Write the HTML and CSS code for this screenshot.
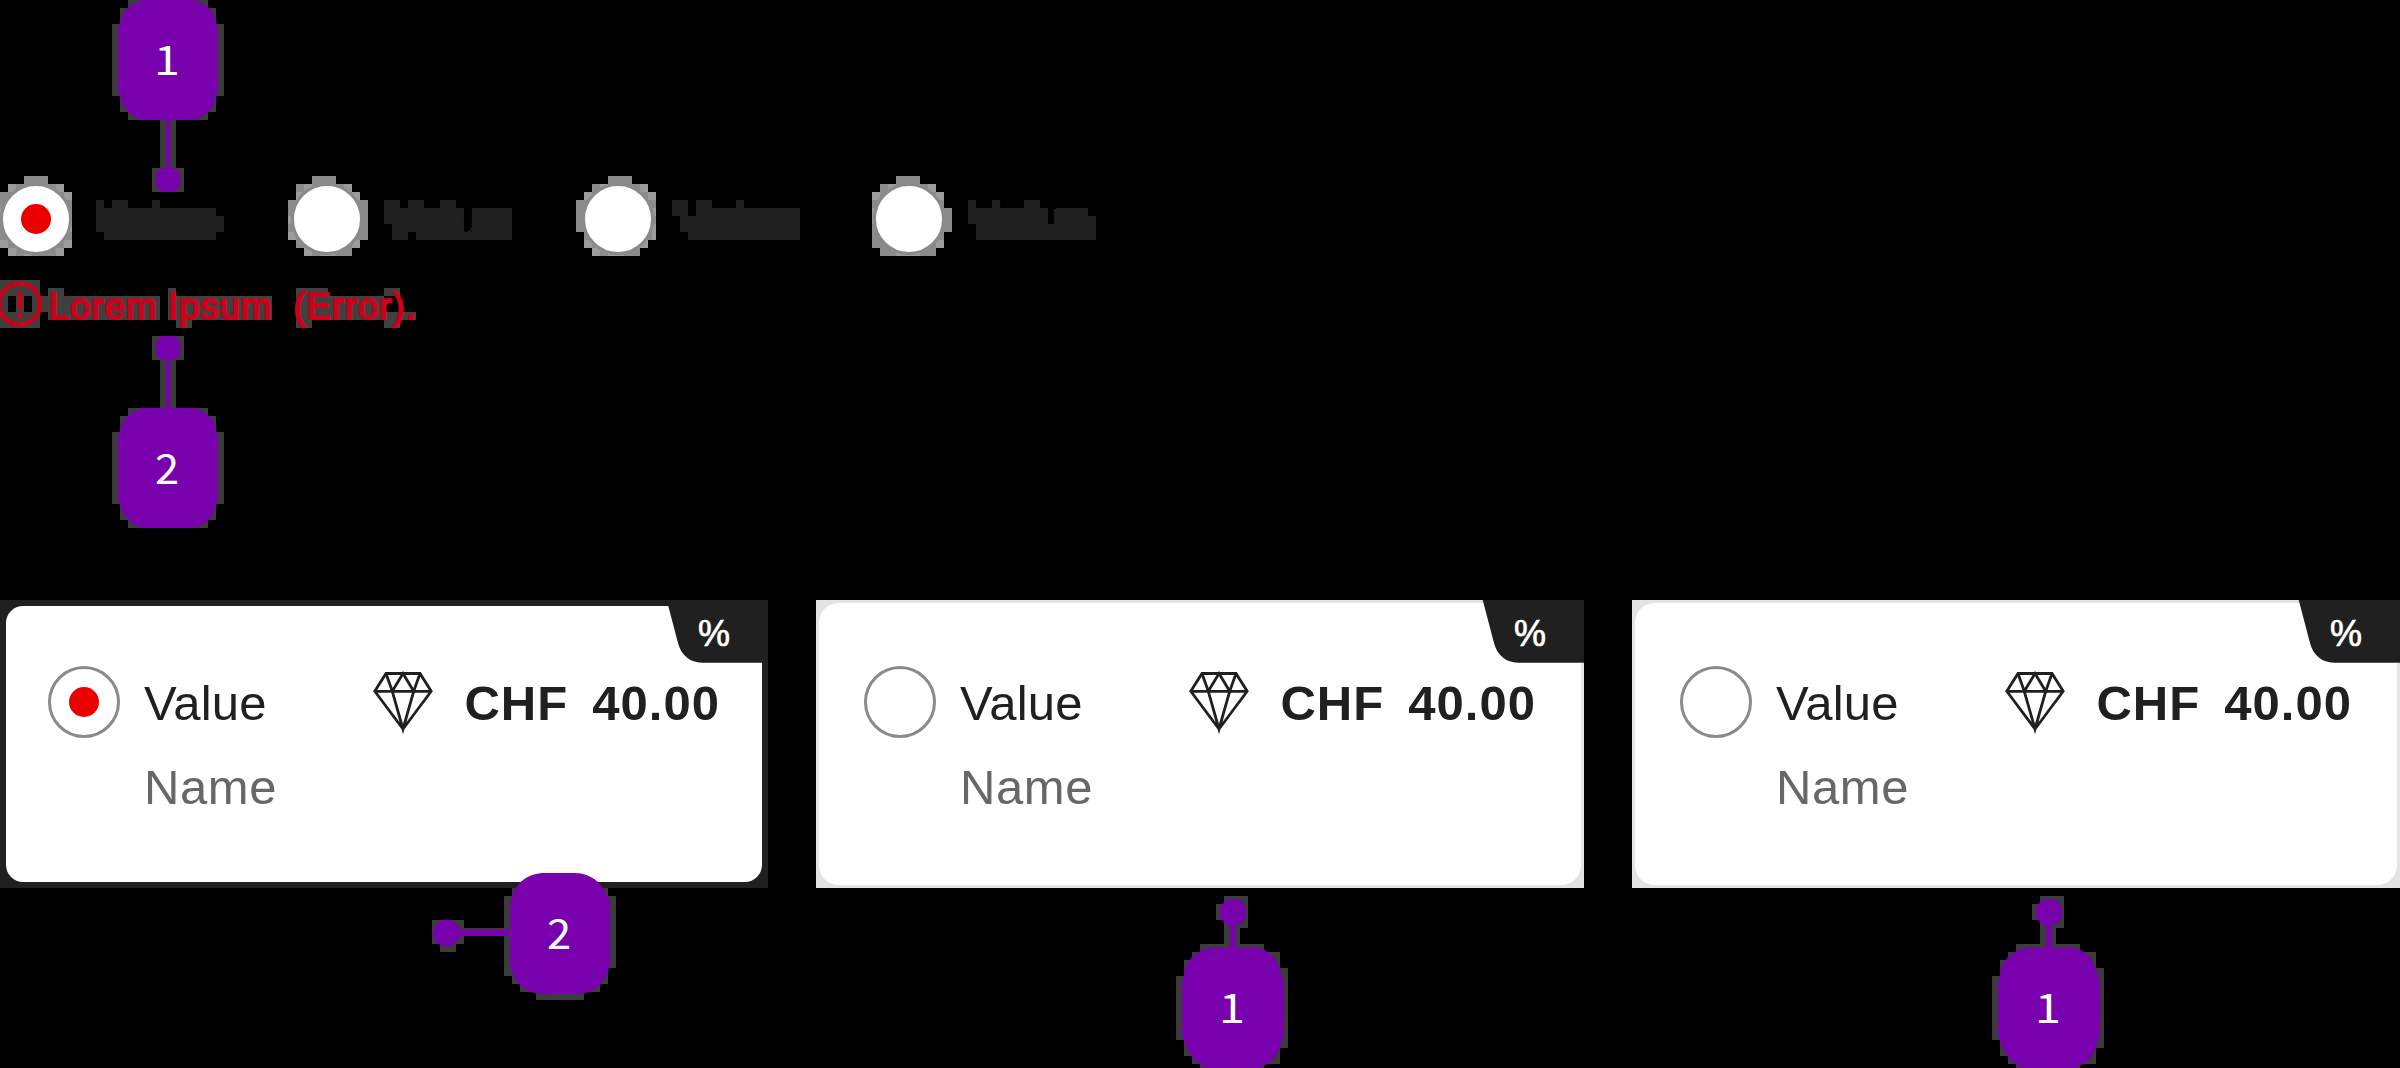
FILE: index.html
```html
<!DOCTYPE html>
<html lang="en">
<head>
<meta charset="utf-8">
<title>Radio group and radio cards</title>
<link rel="stylesheet" href="styles.css">
</head>
<body>
<main class="stage">
  <section class="field">
    <div class="options">
      <label class="option">
        <svg class="option-halo" viewBox="0 176 291 80"><path class="ring" d="M24 176h24v8h16v8h8v56h-8v8H8v-8H0v-56h8v-8h16z"/><path class="ring-light" d="M8 184h8v8H8zM0 208h4v16H0zM0 240h8v8H0zM8 248h8v8H8zM56 248h8v8h-8zM24 248h8v8h-8zM56 184h8v8h-8zM64 192h8v8h-8zM64 240h8v8h-8zM68 216h4v16h-4z"/><path class="ink" d="M96 200h8v8h8v-8h16v8h24v-8h8v8h56v8h8v16h-8v8H104v-8h-8z"/></svg>
        <span class="radio checked"></span><span class="option-text">Value</span>
      </label>
      <label class="option">
        <svg class="option-halo" viewBox="291 176 291 80"><path class="ring" d="M312 176h24v8h16v8h8v8h8v40h-8v8h-8v8h-48v-8h-8v-8h-8v-40h8v-16h16z"/><path class="ring-light" d="M296 192h8v8h-8zM288 216h6v8h-6zM288 232h8v8h-8zM304 248h8v8h-8zM320 252h16v4h-16zM352 192h8v8h-8zM352 240h8v8h-8zM304 184h8v8h-8zM344 184h8v8h-8z"/><path class="ink" d="M384 200h16v8h8v-8h16v8h16v-8h16v8h8v24h8v-24h40v32h-96v-8h-8v8h-16v-16h-8z"/></svg>
        <span class="radio"></span><span class="option-text">Value</span>
      </label>
      <label class="option">
        <svg class="option-halo" viewBox="582 176 291 80"><path class="ring" d="M608 176h24v8h16v8h8v48h-8v8h-8v8h-48v-8h-8v-16h-8v-32h8v-8h8v-8h16z"/><path class="ring-light" d="M584 192h8v8h-8zM600 184h8v8h-8zM640 184h8v8h-8zM648 192h8v8h-8zM652 208h4v8h-4zM652 224h4v16h-4zM640 240h8v8h-8zM592 248h8v8h-8zM608 252h16v4h-16zM584 240h8v8h-8z"/><path class="ink" d="M672 200h16v16h8v-16h16v8h24v-8h8v8h56v32H688v-8h-8v-16h-8z"/></svg>
        <span class="radio"></span><span class="option-text">Value</span>
      </label>
      <label class="option">
        <svg class="option-halo" viewBox="873 176 291 80"><path class="ring" d="M896 176h24v8h16v8h8v16h8v24h-8v16h-8v8h-56v-8h-8v-56h8v-8h16z"/><path class="ring-light" d="M872 192h8v8h-8zM872 208h4v16h-4zM888 184h8v8h-8zM928 184h8v8h-8zM936 192h8v8h-8zM936 240h8v8h-8zM896 252h24v4h-24z"/><path class="ink" d="M968 200h8v8h16v-8h8v8h24v-8h16v8h8v16h8v-16h32v8h8v24H976v-16h-8z"/></svg>
        <span class="radio"></span><span class="option-text">Value</span>
      </label>
    </div>
    <p class="error">
      <svg class="error-halo" viewBox="0 280 420 48"><path d="M0 280h40v16h8v-8h16v8h96v24H48v-8h-8v16H0zM8 296v16h8v-16zM24 296v16h8v-16zM168 288h8v8h96v24h-80v8h-16v-8h-8zM296 288h32v8h56v-8h16v8h-16v16h32v8h-16v8h-16v-8h-72v8h-16z"/></svg>
      <svg class="error-icon" viewBox="0 280 44 48"><circle cx="19.5" cy="304" r="20.5"/><path d="M20 292v17M20 313v5"/></svg>
      <span class="error-text">Lorem Ipsum&nbsp; (Error).</span>
    </p>
  </section>

  <section class="cards">
    <article class="card selected">
      <svg class="tag-shape" viewBox="0 0 102 63"><path d="M.7 0H102v62.700H36C24 62.700 15 55 12 43z"/></svg><span class="tag">%</span>
      <div class="row"><span class="radio checked"></span><span class="value">Value</span><svg class="gem" viewBox="0 0 60 60"><path d="M13 1.500h34L58.200 19.300 30 57 1.800 19.300zM1.800 19.300h56.400M13 1.500l6.300 17.800L30 1.500l10.700 17.800L47 1.500M19.300 19.300 30 57l10.700-37.700"/></svg><span class="price">CHF&nbsp; 40.00</span></div>
      <div class="name">Name</div>
    </article>
    <article class="card">
      <svg class="tag-shape" viewBox="0 0 102 63"><path d="M.7 0H102v62.700H36C24 62.700 15 55 12 43z"/></svg><span class="tag">%</span>
      <div class="row"><span class="radio"></span><span class="value">Value</span><svg class="gem" viewBox="0 0 60 60"><path d="M13 1.500h34L58.200 19.300 30 57 1.800 19.300zM1.800 19.300h56.400M13 1.500l6.300 17.800L30 1.500l10.700 17.800L47 1.500M19.300 19.300 30 57l10.700-37.700"/></svg><span class="price">CHF&nbsp; 40.00</span></div>
      <div class="name">Name</div>
    </article>
    <article class="card">
      <svg class="tag-shape" viewBox="0 0 102 63"><path d="M.7 0H102v62.700H36C24 62.700 15 55 12 43z"/></svg><span class="tag">%</span>
      <div class="row"><span class="radio"></span><span class="value">Value</span><svg class="gem" viewBox="0 0 60 60"><path d="M13 1.500h34L58.200 19.300 30 57 1.800 19.300zM1.800 19.300h56.400M13 1.500l6.300 17.800L30 1.500l10.700 17.800L47 1.500M19.300 19.300 30 57l10.700-37.700"/></svg><span class="price">CHF&nbsp; 40.00</span></div>
      <div class="name">Name</div>
    </article>
  </section>

  <!-- Numbered annotations -->
  <div class="callout label-top">
    <svg viewBox="112 0 112 192"><path class="halo" d="M128 0h80v8h8v16h8v72h-8v16h-8v8h-32v48h8v24h-32v-24h8v-48h-32v-8h-8V96h-8V24h8V8h8z"/><path class="fill" d="M143 0h50Q216 6 216 24l2 4v64l-2 4Q214 114 194 120H142Q124 114 120 96l-2-4V28l2-4Q122 6 143 0zM166 119h4v50h-4z"/><rect class="fill" x="156" y="168" width="24" height="24" rx="8"/></svg>
    <span class="digit">1</span>
  </div>
  <div class="callout label-error">
    <svg viewBox="112 336 112 192"><path class="halo" d="M152 336h32v24h-8v48h32v8h8v16h8v72h-8v16h-8v8h-80v-8h-8v-16h-8v-72h8v-16h8v-8h32v-48h-8z"/><path class="fill" d="M143 408h50Q216 414 216 432l2 4v64l-2 4Q214 522 194 528H142Q124 522 120 504l-2-4V436l2-4Q122 414 143 408zM166 359h4v50h-4z"/><rect class="fill" x="156" y="336" width="24" height="24" rx="8"/></svg>
    <span class="digit two">2</span>
  </div>
  <div class="callout card-selected">
    <svg viewBox="432 872 184 128"><path class="halo" d="M432 920h32v8h40v-32h8v-8h96v8h8v72h-8v16h-8v8h-16v8h-48v-8h-16v-8h-8v-8h-8v-40h-40v8h-8v8h-16v-8h-8z"/><path class="fill" d="M545 873h30C592 873 605 886 608 898l2 4v64l-2 4C605 984 594 994 575 994h-30C526 994 515 984 512 970l-2-4v-64l2-4C515 883 528 873 545 873zM459 929.500h52v6.500h-52z"/><circle class="fill" cx="446.500" cy="933" r="13.500"/></svg>
    <span class="digit two">2</span>
  </div>
  <div class="callout card-second">
    <svg viewBox="1176 896 112 172"><path class="halo" d="M1224 896h24v32h-8v16h24v8h16v16h8v80h-8v16h-16v4h-64v-4h-8v-8h-8v-16h-8v-64h8v-16h8v-8h8v-8h24v-24h-8v-16h8z"/><path class="fill" d="M1212 947.500h44C1274 951 1279 964 1282 976l2 4v56l-2 4C1279 1054 1272 1064 1258 1068h-50C1194 1064 1187 1052 1184 1040l-2-4v-56l2-4C1185 959 1198 950 1212 947.500zM1229.700 922h6v27h-6zM1227 899h12l7 8v11l-7 7h-12l-7-7v-11z"/></svg>
    <span class="digit">1</span>
  </div>
  <div class="callout card-third">
    <svg viewBox="1176 896 112 172"><path class="halo" d="M1224 896h24v32h-8v16h24v8h16v16h8v80h-8v16h-16v4h-64v-4h-8v-8h-8v-16h-8v-64h8v-16h8v-8h8v-8h24v-24h-8v-16h8z"/><path class="fill" d="M1212 947.500h44C1274 951 1279 964 1282 976l2 4v56l-2 4C1279 1054 1272 1064 1258 1068h-50C1194 1064 1187 1052 1184 1040l-2-4v-56l2-4C1185 959 1198 950 1212 947.500zM1229.700 922h6v27h-6zM1227 899h12l7 8v11l-7 7h-12l-7-7v-11z"/></svg>
    <span class="digit">1</span>
  </div>
</main>
</body>
</html>
```
FILE: styles.css
```css
* { box-sizing: border-box; }
body { margin: 0; background: #000; font-family: "Liberation Sans", Arial, sans-serif; }
svg { display: block; overflow: visible; }

.stage {
  position: relative;
  display: flex;
  flex-direction: column;
  width: 2400px;
  height: 1068px;
  overflow: hidden;
  background: #000;
}

.field { height: 600px; padding-top: 176px; }
.options { display: flex; }
.option {
  position: relative;
  display: flex;
  align-items: center;
  width: 291px;
  height: 80px;
  padding-top: 6px;
}
.option-halo { position: absolute; left: 0; top: 0; width: 291px; height: 80px; }
.ring { fill: #8b8b8b; }
.ring-light { fill: #9c9c9c; }
.ink { fill: #202020; }
.option-text {
  position: relative;
  margin-left: 24px;
  color: #212121;
  font-size: 48px;
  line-height: 56px;
}

.radio {
  position: relative;
  display: flex;
  align-items: center;
  justify-content: center;
  flex: none;
  width: 72px;
  height: 72px;
  border: 3px solid #8a8a8a;
  border-radius: 50%;
  background: #fff;
}
.radio.checked::after {
  content: "";
  width: 30px;
  height: 30px;
  border-radius: 50%;
  background: #eb0000;
}

.error {
  position: relative;
  display: flex;
  align-items: center;
  height: 48px;
  margin: 24px 0 0;
}
.error-halo { position: absolute; left: 0; top: 0; width: 420px; height: 48px; fill: #404040; }
.error-icon {
  position: relative;
  width: 44px;
  height: 48px;
  fill: none;
  stroke: #cc0018;
  stroke-width: 4.5;
}
.error-text {
  position: relative;
  margin-left: 5px;
  padding-top: 6px;
  color: #cc0018;
  font-size: 36.5px;
  line-height: 48px;
  letter-spacing: 1px;
  word-spacing: -0.6px;
  white-space: nowrap;
  -webkit-text-stroke: 2px #cc0018;
}

.cards { display: flex; gap: 48px; }
.card {
  position: relative;
  display: flex;
  flex-direction: column;
  width: 768px;
  height: 288px;
  padding: 66px 48px 0;
  background: #fff;
  isolation: isolate;
}
/* Frame with square outer edges and a rounded inner edge */
.card::before {
  content: "";
  position: absolute;
  inset: 3px;
  z-index: -1;
  border-radius: 20px;
  box-shadow: 0 0 0 20px #e3e3e3;
  clip-path: inset(-3px);
}
.card.selected::before { inset: 6px; border-radius: 17px; box-shadow: 0 0 0 20px #202020; clip-path: inset(-6px); }
.tag-shape { position: absolute; top: 0; right: 0; width: 102px; height: 63px; fill: #202020; }
.tag {
  position: absolute;
  top: 14px;
  right: 38px;
  color: #fff;
  font-size: 36px;
  line-height: 40px;
  -webkit-text-stroke: 0.7px #fff;
}
.row { display: flex; align-items: center; height: 72px; }
.value { width: 235px; margin-left: 24px; padding-top: 1px; color: #202020; font-size: 49px; line-height: 56px; letter-spacing: 0.2px; }
.gem { flex: none; width: 60px; height: 60px; fill: none; stroke: #202020; stroke-width: 2.8; }
.price { margin-left: 31px; padding-top: 1px; color: #202020; font-size: 49px; font-weight: 700; line-height: 56px; letter-spacing: 1px; word-spacing: -2.5px; white-space: nowrap; }
.name { margin: 21px 0 0 96px; color: #676767; font-size: 49px; line-height: 56px; letter-spacing: 0.6px; }

.callout { position: absolute; }
.callout svg { width: 100%; height: 100%; }
.halo { fill: #3c3c3c; }
.fill { fill: #7900ad; }
.digit {
  position: absolute;
  width: 40px;
  color: #fff;
  font: 400 41px/60px "Noto Sans CJK JP", sans-serif;
  text-align: center;
  transform: scaleX(1.14);
}
.digit.two { transform: scaleX(1.06); }
.label-top { left: 112px; top: 0; width: 112px; height: 192px; }
.label-top .digit { left: 35px; top: 27px; }
.label-error { left: 112px; top: 336px; width: 112px; height: 192px; }
.label-error .digit { left: 35px; top: 100px; }
.card-selected { left: 432px; top: 872px; width: 184px; height: 128px; }
.card-selected .digit { left: 107px; top: 29px; }
.card-second, .card-third { top: 896px; width: 112px; height: 172px; }
.card-second { left: 1176px; }
.card-third { left: 1992px; }
.card-second .digit, .card-third .digit { left: 36px; top: 79px; }
```
